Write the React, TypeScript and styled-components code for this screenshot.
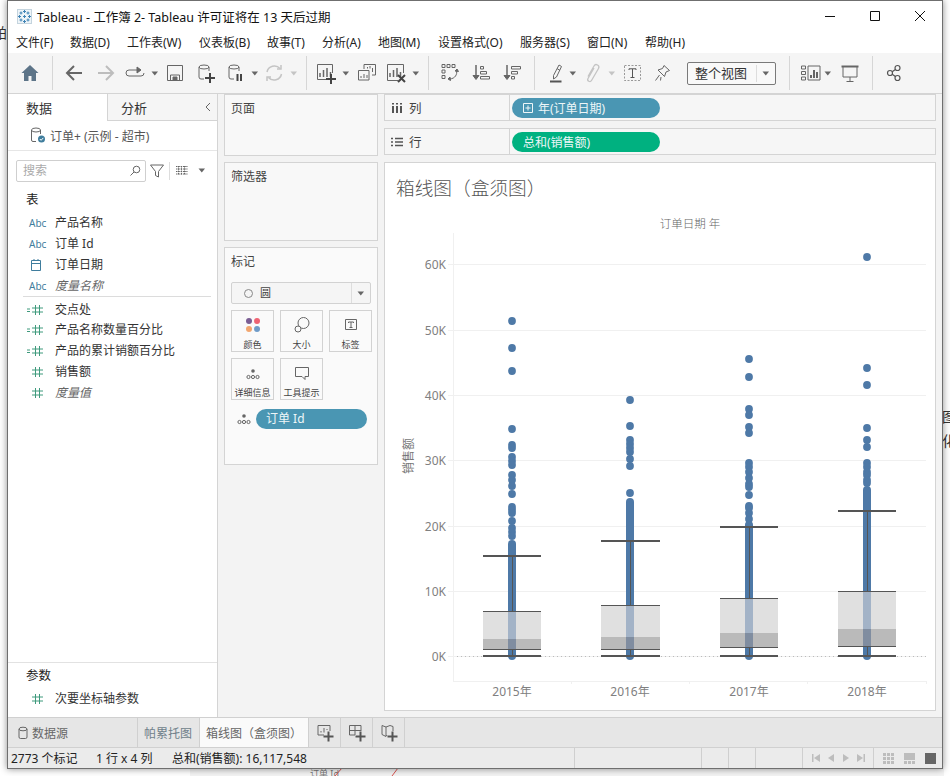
import React from "react";
import styled, { createGlobalStyle } from "styled-components";

const GlobalStyle = createGlobalStyle`
  html, body { margin: 0; padding: 0; background: #fff; }
  body { font-family: "Noto Sans", "Noto Sans CJK SC", sans-serif; font-size: 12px; color: #333; }
  * { box-sizing: border-box; }
`;

// Icons

const Icon = styled.svg.attrs({ fill: "none", xmlns: "http://www.w3.org/2000/svg" })`
  display: block;
  flex: none;
`;

const Ic = ({ w = 24, h = 24, c = "#666", sw = 1, children }: { w?: number; h?: number; c?: string; sw?: number; children: React.ReactNode }) => (
  <Icon width={w} height={h} viewBox={`0 0 ${w} ${h}`} stroke={c} strokeWidth={sw}>
    {children}
  </Icon>
);

const Plus = ({ x, y, c = "#444" }: { x: number; y: number; c?: string }) => (
  <path d={`M${x - 5} ${y}h10M${x} ${y - 5}v10`} stroke={c} strokeWidth="2" />
);

const BarsGlyph = () => <path d="M6 16v-4M9.500 16v-7M13 16v-9M16.500 16v-5" strokeWidth="1.500" stroke="#666" />;

const Logo = () => {
  const crosses = [[7.5, 2.5], [7.5, 12.5], [2.5, 7.5], [12.5, 7.5], [7.5, 7.5], [4, 4], [11, 4], [4, 11], [11, 11]] as const;
  return (
    <Icon width={15} height={15} viewBox="0 0 15 15">
      <rect x=".5" y=".5" width="14" height="14" fill="#eef4f8" stroke="#c4d4de" />
      {crosses.map(([x, y], i) => (
        <path key={i} d={`M${x - 1.5} ${y}h3M${x} ${y - 1.5}v3`} stroke="#3f83b5" strokeWidth="1" />
      ))}
    </Icon>
  );
};

const Home = () => (
  <Ic>
    <path d="M12 4 L3.500 12 H6 V20 H10.500 V15 H13.500 V20 H18 V12 H20.500 Z" fill="#5d7488" stroke="none" />
  </Ic>
);
const ArrowLeft = ({ c = "#666", flip = false }: { c?: string; flip?: boolean }) => (
  <Ic c={c} sw={2}>
    <path d={flip ? "M5 12h15M13 5l7 7-7 7" : "M20 12H5M12 5l-7 7 7 7"} />
  </Ic>
);
const Redo = () => (
  <Ic>
    <path d="M15 9H6a3 3 0 0 0 0 6h12a3 3 0 0 0 3-3" />
    <path d="M14 6l4 3-4 3z" fill="#666" />
  </Ic>
);
const Save = () => (
  <Ic>
    <path d="M4.500 4.500h15v15h-15z" />
    <path d="M7.500 19v-5h9v5" />
    <path d="M10 16h4v3h-4z" fill="#666" />
  </Ic>
);
const Cyl = ({ x = 5, y = 4 }: { x?: number; y?: number }) => (
  <>
    <ellipse cx={x + 5} cy={y + 2} rx={5} ry={2} />
    <path d={`M${x} ${y + 2}v10a2 2 0 0 0 2 2h3M${x + 10} ${y + 2}v4`} />
  </>
);
const DbPlus = () => (
  <Ic>
    <Cyl />
    <Plus x={16} y={17} />
  </Ic>
);
const DbPause = () => (
  <Ic>
    <Cyl />
    <path d="M13.500 13v7M17 13v7" stroke="#444" strokeWidth="2" />
  </Ic>
);
const Refresh = () => (
  <Ic c="#c4c4c4" sw={1.500}>
    <path d="M5 11a7.500 7.500 0 0 1 13-3.500M19.500 13a7.500 7.500 0 0 1-13 3.500" />
    <path d="M19 4v4h-4M5 20v-4h4" />
  </Ic>
);
const ChartPlus = () => (
  <Ic>
    <path d="M15 18.500H3.500v-15h15V12" />
    <BarsGlyph />
    <Plus x={17} y={18} />
  </Ic>
);
const ChartStack = () => (
  <Ic>
    <path d="M9 8V3.500h11.500V14H17" />
    <path d="M12.500 7.500V6M15 7.500V5M17.500 11V7" />
    <path d="M3.500 9.500H14v9.500H3.500z" fill="#f5f5f5" />
    <path d="M6 17v-2M9 17v-4M12 17v-3" />
  </Ic>
);
const ChartX = () => (
  <Ic>
    <path d="M14 19.500H3.500v-16h16V12" />
    <BarsGlyph />
    <path d="M14 14l7 7M21 14l-7 7" stroke="#444" strokeWidth="2" />
  </Ic>
);
const Swap = () => (
  <Ic>
    <path d="M5 3.500h3v3H5zM10 3.500h3v3h-3zM15 3.500h3v3h-3zM5 9h3v3H5zM5 14.500h3v3H5z" />
    <path d="M19.500 9.500c1 4-1.500 8-6.500 8.500" />
    <path d="M18 10l2-2 1.500 2.500zM13 16l-2 2 2.500 1.500z" fill="#666" />
  </Ic>
);
const SortAsc = ({ desc = false }: { desc?: boolean }) => (
  <Ic>
    <path d="M7 4v12" strokeWidth="1.500" />
    <path d="M4 14.500h6L7 18.500z" fill="#666" />
    {desc ? (
      <path d="M11.500 5.500h9v2.500h-9zM11.500 10.500h6V13h-6zM11.500 15.500h3V18h-3z" />
    ) : (
      <path d="M11.500 5.500h3V8h-3zM11.500 10.500h6V13h-6zM11.500 15.500h9V18h-9z" />
    )}
  </Ic>
);
const Marker = () => (
  <Ic>
    <path d="M9.500 14.500 15 4l2.500 1.500-5 10.500-3 2z" />
    <path d="M13 7.500l3 2" />
    <path d="M6 20.500h11.500" stroke="#555" strokeWidth="2" />
  </Ic>
);
const Clip = () => (
  <Ic c="#c4c4c4" sw={1.300}>
    <path d="M8 15.500 14 5a2.500 2.500 0 0 1 4.500 2.500l-7 12a2 2 0 0 1-3.500-2l6-10.500" />
  </Ic>
);
const TextBox = () => (
  <Ic c="#999">
    <path d="M3.500 4.500h16v15h-16z" strokeDasharray="2 1.500" />
    <path d="M8 9V7.800h7V9M11.500 8v8.500M9.500 16.500h4" stroke="#555" />
  </Ic>
);
const Pin = () => (
  <Ic>
    <path d="M14 4.500l5.500 5-3.500 1.500-1.500 4.500-6.500-6.500 4.500-1.500z" />
    <path d="M9.500 14l-4 5.500" />
    <path d="M11 16l-.5 3.500" />
  </Ic>
);
const ShowMe = () => (
  <Ic>
    <path d="M2.500 5h4v3h-4zM2.500 10.500h4v3h-4zM2.500 16h4v3h-4z" />
    <path d="M9 5h12v14H9z" />
    <path d="M12 17v-3M15 17v-8M18 17v-6" strokeWidth="2" />
  </Ic>
);
const Present = () => (
  <Ic>
    <path d="M3.500 5.500h17" strokeWidth="2" />
    <path d="M5 6v10h14V6M12 16v4M8.500 20.500h7" />
  </Ic>
);
const Share = () => (
  <Ic c="#555" sw={1.200}>
    <circle cx="8" cy="12" r="2.500" />
    <circle cx="15.500" cy="7" r="2.500" />
    <circle cx="15.500" cy="17" r="2.500" />
    <path d="M10.200 10.800l3.200-2.400M10.200 13.200l3.200 2.400" />
  </Ic>
);

const Hash = ({ c = "#3f9a7d" }: { c?: string }) => <path d="M5.500 2v10M9.500 2v10M2 5h11M2 9h11" stroke={c} />;

const MeasureIcon = ({ calc = false }: { calc?: boolean }) => (
  <Ic w={18} h={14}>
    <g transform="translate(3 0)">
      <Hash />
    </g>
    {calc && <path d="M0 6h3M0 8.500h3" stroke="#3f9a7d" />}
  </Ic>
);

const CalendarIcon = () => (
  <Ic w={18} h={14} c="#3f7d9d">
    <path d="M4.500 2.500h9v10h-9zM4.500 5.500h9M7 1v2M11 1v2" />
  </Ic>
);

const Caret = ({ c = "#666" }: { c?: string }) => (
  <Ic w={8} h={5} c="none">
    <path d="M.5.500h6.500L3.800 4.500z" fill={c} />
  </Ic>
);

// Window frame

const Desktop = styled.div`
  position: relative;
  width: 950px;
  height: 776px;
  padding-left: 7px;
  overflow: hidden;
  background: #fff;
`;

const Scrap = styled.span<{ $x: number; $y: number; $size?: number; $color?: string }>`
  position: absolute;
  left: ${(p) => p.$x}px;
  top: ${(p) => p.$y}px;
  font-size: ${(p) => p.$size ?? 14}px;
  color: ${(p) => p.$color ?? "#333"};
  white-space: nowrap;
`;

const BackPanel = styled.div`
  position: absolute;
  left: 190px;
  right: 6px;
  bottom: 0;
  height: 10px;
  background: #f4f4f4;
`;

const BackLines = styled.svg`
  position: absolute;
  left: 330px;
  top: 766px;
`;

const Window = styled.div`
  position: relative;
  z-index: 1;
  width: 936px;
  height: 769px;
  display: flex;
  flex-direction: column;
  background: #fff;
  border: 1px solid #6f6f6f;
  box-shadow: 0 0 7px rgba(0, 0, 0, 0.45);
`;

const TitleBar = styled.div`
  height: 30px;
  flex: none;
  display: flex;
  align-items: center;
  padding-left: 9px;
  color: #111;
  font-size: 12.500px;
`;

const TitleText = styled.span`
  flex: 1;
  margin-left: 5px;
`;

const WinButton = styled.div`
  width: 45px;
  height: 30px;
  display: flex;
  align-items: center;
  justify-content: center;
`;

const MenuBar = styled.div`
  height: 22px;
  flex: none;
  display: flex;
  align-items: center;
  padding-left: 8px;
  color: #222;
`;

const MenuItem = styled.span<{ $w: number }>`
  width: ${(p) => p.$w}px;
  white-space: nowrap;
`;

const Toolbar = styled.div`
  height: 41px;
  flex: none;
  display: flex;
  align-items: center;
  background: #f5f5f5;
  border-bottom: 1px solid #d4d4d4;
`;

const Tool = styled.div<{ $ml: number; $w?: number }>`
  width: ${(p) => p.$w ?? 24}px;
  height: 24px;
  flex: none;
  margin-left: ${(p) => p.$ml}px;
  display: flex;
  align-items: center;
  justify-content: center;
`;

const ToolSep = styled.div<{ $ml: number }>`
  width: 1px;
  height: 34px;
  flex: none;
  margin-left: ${(p) => p.$ml}px;
  background: #d6d6d6;
`;

const FitSelect = styled.div<{ $ml: number }>`
  width: 89px;
  height: 23px;
  flex: none;
  margin-left: ${(p) => p.$ml}px;
  display: flex;
  align-items: center;
  border: 1px solid #7a7a7a;
  border-radius: 2px;
  background: #f9f9f9;
  font-size: 13px;
  color: #333;
`;

const FitLabel = styled.span`
  width: 69px;
  padding-left: 7px;
  border-right: 1px solid #ddd;
  line-height: 17px;
`;

const FitCaret = styled.span`
  flex: 1;
  display: flex;
  justify-content: center;
`;

// Main panes

const Main = styled.div`
  flex: 1;
  min-height: 0;
  display: flex;
  background: #f3f3f3;
`;

const DataPane = styled.div`
  width: 210px;
  flex: none;
  display: flex;
  flex-direction: column;
  background: #fff;
  border-right: 1px solid #d4d4d4;
`;

const PaneTabs = styled.div`
  height: 27px;
  flex: none;
  display: flex;
  background: #fff;
`;

const PaneTab = styled.div<{ $active?: boolean }>`
  width: ${(p) => (p.$active ? 100 : 109)}px;
  display: flex;
  align-items: center;
  padding-left: ${(p) => (p.$active ? 18 : 13)}px;
  padding-right: 5px;
  justify-content: space-between;
  font-size: 13px;
  color: #333;
  background: ${(p) => (p.$active ? "#fff" : "#f5f5f5")};
  border-right: ${(p) => (p.$active ? "1px solid #d4d4d4" : "none")};
  border-bottom: ${(p) => (p.$active ? "none" : "1px solid #d4d4d4")};
`;

const SourceRow = styled.div`
  height: 30px;
  flex: none;
  display: flex;
  align-items: center;
  padding-left: 22px;
  gap: 2px;
  color: #555;
  border-bottom: 1px solid #e6e6e6;
`;

const SearchRow = styled.div`
  height: 39px;
  flex: none;
  display: flex;
  align-items: center;
  padding-left: 8px;
`;

const SearchBox = styled.div`
  width: 130px;
  height: 22px;
  display: flex;
  align-items: center;
  justify-content: space-between;
  padding: 0 4px 0 6px;
  border: 1px solid #cfcfcf;
  border-radius: 2px;
  color: #aaa;
  line-height: 16px;
`;

const SearchTools = styled.div`
  display: flex;
  align-items: center;
  margin-left: 3px;
`;

const MiniSep = styled.div`
  width: 1px;
  height: 18px;
  background: #ddd;
  margin: 0 5px 0 4px;
`;

const ListCaret = styled.span`
  margin-left: 9px;
`;

const SectionTitle = styled.div`
  margin-left: 18px;
  height: 20px;
  line-height: 20px;
  font-size: 12.500px;
  color: #222;
`;

const FieldList = styled.div`
  margin-top: 3px;
  display: flex;
  flex-direction: column;
`;

const FieldRow = styled.div`
  height: 20.800px;
  line-height: 16px;
  display: flex;
  align-items: center;
  color: #333;
`;

const AbcText = styled.span`
  width: 47px;
  padding-left: 21px;
  font-size: 10px;
  color: #3f7d9d;
`;

const IconSlot = styled.span`
  width: 47px;
  padding-left: 19px;
`;

const FieldName = styled.span<{ $virtual?: boolean }>`
  font-style: ${(p) => (p.$virtual ? "italic" : "normal")};
  color: ${(p) => (p.$virtual ? "#666" : "#333")};
`;

const FieldDivider = styled.div`
  height: 1px;
  margin: 0 6px 2px 15px;
  background: #dcdcdc;
`;

const ParamSection = styled.div`
  margin-top: auto;
  height: 55px;
  padding-top: 3px;
  border-top: 1px solid #e2e2e2;
`;

const SideColumn = styled.div`
  width: 154px;
  flex: none;
  margin-left: 6px;
  display: flex;
  flex-direction: column;
  gap: 6px;
`;

const Card = styled.div<{ $h: number }>`
  height: ${(p) => p.$h}px;
  flex: none;
  padding: 6px;
  line-height: 16px;
  background: #f8f8f8;
  border: 1px solid #d4d4d4;
  color: #444;
`;

const MarksCard = styled(Card)`
  background: #fafafa;
  display: flex;
  flex-direction: column;
`;

const MarkSelect = styled.div`
  margin-top: 12px;
  height: 22px;
  flex: none;
  display: flex;
  align-items: center;
  background: #f5f5f5;
  border: 1px solid #d2d2d2;
  border-radius: 2px;
  padding-left: 12px;
  gap: 7px;
  font-size: 11px;
`;

const MarkDot = styled.span`
  width: 9px;
  height: 9px;
  border: 1px solid #888;
  border-radius: 50%;
`;

const MarkSelectText = styled.span`
  flex: 1;
`;

const MarkCaret = styled.span`
  width: 19px;
  height: 20px;
  display: flex;
  align-items: center;
  justify-content: center;
  border-left: 1px solid #ddd;
`;

const MarkGrid = styled.div`
  margin-top: 6px;
  display: grid;
  grid-template-columns: 43px 43px 43px;
  grid-auto-rows: 42px;
  column-gap: 6px;
  row-gap: 6px;
`;

const MarkButton = styled.div`
  display: flex;
  flex-direction: column;
  align-items: center;
  border: 1px solid #d2d2d2;
  padding-top: 5px;
  font-size: 9px;
  white-space: nowrap;
  color: #444;
`;

const MarkLabel = styled.span`
  margin-top: 5px;
  line-height: 11px;
`;

const GlyphBox = styled.span`
  height: 18px;
  padding-top: 4px;
`;

const PillRow = styled.div`
  margin-top: 9px;
  display: flex;
  align-items: center;
  padding-left: 6px;
  gap: 5px;
`;

const Pill = styled.div<{ $color: string; $w: number; $pad?: number }>`
  width: ${(p) => p.$w}px;
  height: 20px;
  flex: none;
  display: flex;
  align-items: center;
  gap: 5px;
  padding-left: ${(p) => p.$pad ?? 11}px;
  border-radius: 10px;
  background: ${(p) => p.$color};
  color: #eef6f8;
  white-space: nowrap;
`;

const ViewColumn = styled.div`
  width: 552px;
  flex: none;
  margin-left: 6px;
  display: flex;
  flex-direction: column;
  gap: 7px;
`;

const Shelf = styled.div`
  height: 27px;
  flex: none;
  display: flex;
  background: #f6f6f6;
  border: 1px solid #d4d4d4;
`;

const ShelfLabel = styled.div`
  width: 125px;
  flex: none;
  display: flex;
  align-items: center;
  gap: 6px;
  padding-left: 6px;
  border-right: 1px solid #d4d4d4;
  color: #444;
  font-size: 12.500px;
`;

const ShelfBody = styled.div`
  flex: 1;
  display: flex;
  align-items: center;
  padding-left: 2px;
`;

const ChartCard = styled.div`
  height: 549px;
  flex: none;
  background: #fff;
  border: 1px solid #d4d4d4;
  display: flex;
  flex-direction: column;
`;

const ChartTitle = styled.div`
  height: 42px;
  flex: none;
  padding: 11px 0 0 11px;
  font-size: 18.700px;
  line-height: 26px;
  font-weight: 300;
  font-family: "Noto Sans CJK SC", sans-serif;
  color: #555;
  white-space: nowrap;
`;

const Plot = styled.svg`
  display: block;
  flex: 1;
  width: 100%;
  min-height: 0;
  font-family: "Noto Sans", "Noto Sans CJK SC", sans-serif;
`;

// Bottom bars

const TabBar = styled.div`
  height: 31px;
  flex: none;
  display: flex;
  background: #e6e6e6;
  border-top: 1px solid #d0d0d0;
  border-bottom: 1px solid #d0d0d0;
`;

const SheetTab = styled.div<{ $w: number; $active?: boolean; $muted?: boolean; $pad?: number }>`
  width: ${(p) => p.$w}px;
  flex: none;
  display: flex;
  align-items: center;
  gap: 4px;
  padding-left: ${(p) => p.$pad ?? 6}px;
  border-right: 1px solid #d0d0d0;
  background: ${(p) => (p.$active ? "#fafafa" : "transparent")};
  color: ${(p) => (p.$muted ? "#6f7f8a" : "#666")};
  white-space: nowrap;
`;

const NewTab = styled.div`
  width: 32px;
  flex: none;
  display: flex;
  align-items: center;
  justify-content: center;
  border-right: 1px solid #d0d0d0;
`;

const StatusBar = styled.div`
  height: 20px;
  flex: none;
  display: flex;
  background: #ebebeb;
  color: #222;
`;

const StatusCell = styled.div<{ $w: number }>`
  width: ${(p) => p.$w}px;
  flex: none;
  border-right: 1px solid #cfcfcf;
`;

const StatusMain = styled(StatusCell)`
  display: flex;
  align-items: center;
  padding-left: 3px;
`;

const StatusText = styled.span<{ $w?: number }>`
  width: ${(p) => (p.$w ? `${p.$w}px` : "auto")};
  white-space: nowrap;
`;

const PagerCell = styled(StatusCell)`
  display: flex;
  align-items: center;
  justify-content: space-around;
  padding: 0 5px;
`;

const ViewSizes = styled.div`
  flex: 1;
  display: flex;
  align-items: center;
  gap: 10px;
  padding-left: 9px;
`;

// Chart data, in page pixels

const GRID = [
  { y: 264, label: "60K" },
  { y: 330, label: "50K" },
  { y: 395, label: "40K" },
  { y: 460, label: "30K" },
  { y: 526, label: "20K" },
  { y: 591, label: "10K" },
  { y: 656, label: "0K" },
];

const YEARS = [
  {
    label: "2015年", cx: 512, x1: 483, x2: 541, whisker: 556, top: 611, med: 639, bottom: 649, solid: 544,
    dots: [321, 348, 371, 429, 445, 448, 457, 461, 465, 475, 480, 486, 494, 507, 510, 513, 521, 528, 532, 536],
  },
  {
    label: "2016年", cx: 630, x1: 601, x2: 660, whisker: 541, top: 605, med: 637, bottom: 649, solid: 502,
    dots: [400, 426, 440, 444, 448, 452, 459, 466, 493],
  },
  {
    label: "2017年", cx: 749, x1: 720, x2: 778, whisker: 527, top: 598, med: 633, bottom: 647, solid: 525,
    dots: [359, 377, 409, 415, 427, 433, 463, 467, 472, 478, 484, 487, 495, 506, 508, 513, 519],
  },
  {
    label: "2018年", cx: 867, x1: 838, x2: 896, whisker: 511, top: 591, med: 629, bottom: 646, solid: 490,
    dots: [257, 368, 385, 428, 440, 447, 463, 467, 472, 475, 480, 483],
  },
];

const BLUE = "#4e79a7";
const LINE = "#555";

const BoxPlot = () => (
  <Plot viewBox="385 205 550 505" preserveAspectRatio="none">
    {GRID.slice(0, 6).map((g) => (
      <line key={g.y} x1={448} x2={926} y1={g.y + 0.5} y2={g.y + 0.5} stroke="#f0f0f0" />
    ))}
    <line x1={448} x2={926} y1={656.5} y2={656.5} stroke="#f0f0f0" />
    <line x1={453} x2={926} y1={656.5} y2={656.5} stroke="#bbb" strokeDasharray="1 3" />
    <line x1={453.5} x2={453.5} y1={233} y2={681} stroke="#f0f0f0" />
    <line x1={453} x2={927} y1={681.5} y2={681.5} stroke="#f0f0f0" />
    {[571, 689, 807, 926].map((x) => (
      <line key={x} x1={x + 0.5} x2={x + 0.5} y1={681} y2={684} stroke="#f0f0f0" />
    ))}
    {GRID.map((g) => (
      <text key={g.label} x={446} y={g.y + 4.500} textAnchor="end" fontSize="12" fill="#808080">
        {g.label}
      </text>
    ))}
    <text x={690} y={228} textAnchor="middle" fontSize="11.500" fill="#666" fontWeight="300">
      订单日期 年
    </text>
    <text transform="translate(413 456) rotate(-90)" textAnchor="middle" fontSize="12" fill="#777">
      销售额
    </text>
    {YEARS.map((d) => (
      <g key={d.label}>
        {d.dots.map((y) => (
          <circle key={y} cx={d.cx} cy={y} r={3.900} fill={BLUE} />
        ))}
        <circle cx={d.cx} cy={d.solid} r={4} fill={BLUE} />
        <rect x={d.cx - 4} y={d.solid} width={8} height={656 - d.solid} fill={BLUE} />
        <circle cx={d.cx} cy={656} r={4} fill={BLUE} />
        <rect x={d.x1} y={d.top} width={d.x2 - d.x1} height={d.med - d.top} fill="#e0e0e0" />
        <rect x={d.x1} y={d.med} width={d.x2 - d.x1} height={d.bottom - d.med} fill="#bababa" />
        <rect x={d.cx - 4} y={d.top} width={8} height={d.med - d.top} fill="#a3b3c7" />
        <rect x={d.cx - 4} y={d.med} width={8} height={d.bottom - d.med} fill="#808da0" />
        <line x1={d.cx + 0.5} x2={d.cx + 0.5} y1={d.whisker} y2={d.top} stroke={LINE} />
        <line x1={d.cx + 0.5} x2={d.cx + 0.5} y1={d.bottom} y2={656} stroke={LINE} />
        <line x1={d.x1} x2={d.x2} y1={d.whisker} y2={d.whisker} stroke={LINE} strokeWidth="2" />
        <line x1={d.x1} x2={d.x2} y1={d.top + 0.5} y2={d.top + 0.5} stroke={LINE} />
        <line x1={d.x1} x2={d.x2} y1={d.bottom + 0.5} y2={d.bottom + 0.5} stroke={LINE} />
        <line x1={d.x1} x2={d.x2} y1={656} y2={656} stroke={LINE} strokeWidth="2" />
        <text x={d.cx} y={696} textAnchor="middle" fontSize="12" fill="#808080">
          {d.label}
        </text>
      </g>
    ))}
  </Plot>
);

const MENUS: [string, number][] = [
  ["文件(F)", 54], ["数据(D)", 57], ["工作表(W)", 72], ["仪表板(B)", 68], ["故事(T)", 55], ["分析(A)", 56],
  ["地图(M)", 60], ["设置格式(O)", 82], ["服务器(S)", 67], ["窗口(N)", 58], ["帮助(H)", 60],
];

const DetailGlyph = ({ c = "#666" }: { c?: string }) => (
  <Ic w={14} h={12} c={c}>
    <circle cx="7" cy="3" r="1.800" fill={c} stroke="none" />
    <circle cx="2.500" cy="9" r="1.600" />
    <circle cx="7" cy="9" r="1.600" />
    <circle cx="11.500" cy="9" r="1.600" />
  </Ic>
);

const NewSheetIcon = ({ kind }: { kind: "sheet" | "dash" | "story" }) => (
  <Ic w={18} h={18}>
    {kind === "sheet" && <path d="M8 11H2V1.500h12V7M5 8.500V7M8 8.500V4M11 6V5" />}
    {kind === "dash" && <path d="M7 11H1.500V1.500H13V7M1.500 6.500H13M7 1.500V11" />}
    {kind === "story" && <path d="M7 11l-1 1.500-4-2V1.500l4 1.500 4-1.500 3 1V7M6 3v9" />}
    <Plus x={12.500} y={12.500} c="#555" />
  </Ic>
);

const PagerIcon = ({ d }: { d: string }) => (
  <Ic w={10} h={10} c="none">
    <path d={d} fill="#bdbdbd" />
  </Ic>
);

const ViewSize = ({ kind }: { kind: 0 | 1 | 2 }) => (
  <Ic w={11} h={11} c="none">
    {kind === 0 && (
      <path d="M0 0h3v3H0zM4 0h3v3H4zM8 0h3v3H8zM0 4h3v3H0zM4 4h3v3H4zM8 4h3v3H8zM0 8h3v3H0zM4 8h3v3H4zM8 8h3v3H8z" fill="#bdbdbd" />
    )}
    {kind === 1 && <path d="M0 0h11v7H0zM0 8h3v3H0zM4 8h3v3H4zM8 8h3v3H8z" fill="#bdbdbd" />}
    {kind === 2 && <path d="M0 0h11v11H0z" fill="#666" />}
  </Ic>
);

export default function App() {
  return (
    <>
      <GlobalStyle />
      <Desktop>
        <Scrap $x={-7} $y={22}>帕</Scrap>
        <Scrap $x={942} $y={406}>图</Scrap>
        <Scrap $x={942} $y={430}>化</Scrap>
        <BackPanel />
        <Scrap $x={310} $y={767} $size={9} $color="#777">订单 Id</Scrap>
        <BackLines width="70" height="10" viewBox="0 0 70 10" fill="none">
          <path d="M5 10l7-8M62 10l6-8" stroke="#d9534f" />
        </BackLines>
        <Window>
          <TitleBar>
            <Logo />
            <TitleText>Tableau - 工作簿 2- Tableau 许可证将在 13 天后过期</TitleText>
            <WinButton>
              <Ic w={12} h={12} c="#111"><path d="M1 6.500h10" /></Ic>
            </WinButton>
            <WinButton>
              <Ic w={12} h={12} c="#111"><path d="M1.500 1.500h9v9h-9z" /></Ic>
            </WinButton>
            <WinButton>
              <Ic w={12} h={12} c="#111"><path d="M1 1l10 10M11 1L1 11" /></Ic>
            </WinButton>
          </TitleBar>
          <MenuBar>
            {MENUS.map(([name, w]) => (
              <MenuItem key={name} $w={w}>{name}</MenuItem>
            ))}
          </MenuBar>
          <Toolbar>
            <Tool $ml={10}><Home /></Tool>
            <ToolSep $ml={10} />
            <Tool $ml={9}><ArrowLeft /></Tool>
            <Tool $ml={7}><ArrowLeft c="#bdbdbd" flip /></Tool>
            <Tool $ml={6}><Redo /></Tool>
            <Tool $ml={3} $w={10}><Caret /></Tool>
            <Tool $ml={3}><Save /></Tool>
            <Tool $ml={7}><DbPlus /></Tool>
            <Tool $ml={6}><DbPause /></Tool>
            <Tool $ml={2} $w={10}><Caret /></Tool>
            <Tool $ml={2}><Refresh /></Tool>
            <Tool $ml={3} $w={10}><Caret c="#c4c4c4" /></Tool>
            <ToolSep $ml={7} />
            <Tool $ml={7}><ChartPlus /></Tool>
            <Tool $ml={3} $w={10}><Caret /></Tool>
            <Tool $ml={4}><ChartStack /></Tool>
            <Tool $ml={5}><ChartX /></Tool>
            <Tool $ml={3} $w={10}><Caret /></Tool>
            <ToolSep $ml={7} />
            <Tool $ml={8}><Swap /></Tool>
            <Tool $ml={8}><SortAsc /></Tool>
            <Tool $ml={7}><SortAsc desc /></Tool>
            <ToolSep $ml={10} />
            <Tool $ml={9}><Marker /></Tool>
            <Tool $ml={0} $w={10}><Caret /></Tool>
            <Tool $ml={2}><Clip /></Tool>
            <Tool $ml={3} $w={10}><Caret c="#c4c4c4" /></Tool>
            <Tool $ml={4}><TextBox /></Tool>
            <Tool $ml={5}><Pin /></Tool>
            <FitSelect $ml={13}>
              <FitLabel>整个视图</FitLabel>
              <FitCaret><Caret /></FitCaret>
            </FitSelect>
            <ToolSep $ml={13} />
            <Tool $ml={9}><ShowMe /></Tool>
            <Tool $ml={0} $w={10}><Caret /></Tool>
            <Tool $ml={5}><Present /></Tool>
            <ToolSep $ml={10} />
            <Tool $ml={9}><Share /></Tool>
          </Toolbar>
          <Main>
            <DataPane>
              <PaneTabs>
                <PaneTab $active>数据</PaneTab>
                <PaneTab>
                  分析
                  <Ic w={8} h={10} c="#666"><path d="M6 1L2 5l4 4" /></Ic>
                </PaneTab>
              </PaneTabs>
              <SourceRow>
                <Ic w={18} h={18} c="#666">
                  <ellipse cx="6" cy="3" rx="4.500" ry="2" />
                  <path d="M1.500 3v10a1.500 1.500 0 0 0 1.500 1.500h3M10.500 3v4" />
                  <circle cx="11.500" cy="12" r="3.500" fill="#3f7d9d" stroke="none" />
                  <path d="M9.800 12l1.300 1.300 2.200-2.400" stroke="#fff" />
                </Ic>
                <span>订单+ (示例 - 超市)</span>
              </SourceRow>
              <SearchRow>
                <SearchBox>
                  搜索
                  <Ic w={12} h={12} c="#666"><circle cx="7.500" cy="4.500" r="3.300" /><path d="M5 7l-3.500 3.500" /></Ic>
                </SearchBox>
                <SearchTools>
                  <Ic w={16} h={16} c="#666"><path d="M1.500 2h13L9.500 8.500V14l-3-1.500v-4z" /></Ic>
                  <MiniSep />
                  <Ic w={14} h={12} c="#666"><path d="M1 1.500h12M1 4h12M1 6.500h12M1 9h12M3.500 1v9M6.500 1v9M9.500 1v9" strokeDasharray="1.500 .8" /></Ic>
                  <ListCaret><Caret /></ListCaret>
                </SearchTools>
              </SearchRow>
              <SectionTitle>表</SectionTitle>
              <FieldList>
                <FieldRow><AbcText>Abc</AbcText><FieldName>产品名称</FieldName></FieldRow>
                <FieldRow><AbcText>Abc</AbcText><FieldName>订单 Id</FieldName></FieldRow>
                <FieldRow><IconSlot><CalendarIcon /></IconSlot><FieldName>订单日期</FieldName></FieldRow>
                <FieldRow><AbcText>Abc</AbcText><FieldName $virtual>度量名称</FieldName></FieldRow>
                <FieldDivider />
                <FieldRow><IconSlot><MeasureIcon calc /></IconSlot><FieldName>交点处</FieldName></FieldRow>
                <FieldRow><IconSlot><MeasureIcon calc /></IconSlot><FieldName>产品名称数量百分比</FieldName></FieldRow>
                <FieldRow><IconSlot><MeasureIcon calc /></IconSlot><FieldName>产品的累计销额百分比</FieldName></FieldRow>
                <FieldRow><IconSlot><MeasureIcon /></IconSlot><FieldName>销售额</FieldName></FieldRow>
                <FieldRow><IconSlot><MeasureIcon /></IconSlot><FieldName $virtual>度量值</FieldName></FieldRow>
              </FieldList>
              <ParamSection>
                <SectionTitle>参数</SectionTitle>
                <FieldList>
                  <FieldRow><IconSlot><MeasureIcon /></IconSlot><FieldName>次要坐标轴参数</FieldName></FieldRow>
                </FieldList>
              </ParamSection>
            </DataPane>
            <SideColumn>
              <Card $h={62}>页面</Card>
              <Card $h={79}>筛选器</Card>
              <MarksCard $h={218}>
                标记
                <MarkSelect>
                  <MarkDot />
                  <MarkSelectText>圆</MarkSelectText>
                  <MarkCaret><Caret /></MarkCaret>
                </MarkSelect>
                <MarkGrid>
                  <MarkButton>
                    <Ic w={16} h={18} c="none">
                      <circle cx="4" cy="5" r="3" fill="#7b5e94" />
                      <circle cx="12" cy="5" r="3" fill="#ee6373" />
                      <circle cx="4" cy="13" r="3" fill="#f2a66f" />
                      <circle cx="12" cy="13" r="3" fill="#6f9bc8" />
                    </Ic>
                    <MarkLabel>颜色</MarkLabel>
                  </MarkButton>
                  <MarkButton>
                    <Ic w={16} h={18}>
                      <circle cx="9.500" cy="7" r="5.500" />
                      <circle cx="4" cy="13" r="3" fill="#fafafa" />
                    </Ic>
                    <MarkLabel>大小</MarkLabel>
                  </MarkButton>
                  <MarkButton>
                    <Ic w={16} h={18}>
                      <path d="M2.500 3.500h11v10h-11z" />
                      <path d="M5.500 7V6h5v1M8 6v5.500M6.500 11.500h3" />
                    </Ic>
                    <MarkLabel>标签</MarkLabel>
                  </MarkButton>
                  <MarkButton>
                    <GlyphBox><DetailGlyph /></GlyphBox>
                    <MarkLabel>详细信息</MarkLabel>
                  </MarkButton>
                  <MarkButton>
                    <Ic w={16} h={18}>
                      <path d="M1.500 3.500h13v9H11v3l-3-3H1.500z" />
                    </Ic>
                    <MarkLabel>工具提示</MarkLabel>
                  </MarkButton>
                </MarkGrid>
                <PillRow>
                  <DetailGlyph />
                  <Pill $color="#4a96b3" $w={111} $pad={10}>订单 Id</Pill>
                </PillRow>
              </MarksCard>
            </SideColumn>
            <ViewColumn>
              <Shelf>
                <ShelfLabel>
                  <Ic w={12} h={12} c="#555" sw={2}><path d="M2 4v7M6 4v7M10 4v7" /><path d="M2 1v1.500M6 1v1.500M10 1v1.500" /></Ic>
                  列
                </ShelfLabel>
                <ShelfBody>
                  <Pill $color="#4a96b3" $w={148}>
                    <Ic w={10} h={10} c="#eef6f8"><path d="M.5.500h9v9h-9zM2.500 5h5M5 2.500v5" /></Ic>
                    年(订单日期)
                  </Pill>
                </ShelfBody>
              </Shelf>
              <Shelf>
                <ShelfLabel>
                  <Ic w={12} h={12} c="#555" sw={1.500}><path d="M0 2.500h2M4 2.500h8M0 6h2M4 6h8M0 9.500h2M4 9.500h8" /></Ic>
                  行
                </ShelfLabel>
                <ShelfBody>
                  <Pill $color="#00b180" $w={148}>总和(销售额)</Pill>
                </ShelfBody>
              </Shelf>
              <ChartCard>
                <ChartTitle>箱线图（盒须图）</ChartTitle>
                <BoxPlot />
              </ChartCard>
            </ViewColumn>
          </Main>
          <TabBar>
            <SheetTab $w={130} $pad={10}>
              <Ic w={10} h={14} c="#666"><ellipse cx="5" cy="3" rx="4" ry="1.800" /><path d="M1 3v8a1.500 1.500 0 0 0 1.500 1.500h5A1.500 1.500 0 0 0 9 11V3" /></Ic>
              数据源
            </SheetTab>
            <SheetTab $w={62} $muted>帕累托图</SheetTab>
            <SheetTab $w={109} $active>箱线图（盒须图）</SheetTab>
            <NewTab><NewSheetIcon kind="sheet" /></NewTab>
            <NewTab><NewSheetIcon kind="dash" /></NewTab>
            <NewTab><NewSheetIcon kind="story" /></NewTab>
          </TabBar>
          <StatusBar>
            <StatusMain $w={567}>
              <StatusText $w={85}>2773 个标记</StatusText>
              <StatusText $w={76}>1 行 x 4 列</StatusText>
              <StatusText>总和(销售额): 16,117,548</StatusText>
            </StatusMain>
            <StatusCell $w={127} />
            <StatusCell $w={27} />
            <StatusCell $w={27} />
            <StatusCell $w={47} />
            <PagerCell $w={71}>
              <PagerIcon d="M1 1h1.500v8H1zM9 1v8L3 5z" />
              <PagerIcon d="M8 1v8L2 5z" />
              <PagerIcon d="M2 1v8l6-4z" />
              <PagerIcon d="M9 1H7.500v8H9zM1 1v8l6-4z" />
            </PagerCell>
            <ViewSizes>
              <ViewSize kind={0} />
              <ViewSize kind={1} />
              <ViewSize kind={2} />
            </ViewSizes>
          </StatusBar>
        </Window>
      </Desktop>
    </>
  );
}
